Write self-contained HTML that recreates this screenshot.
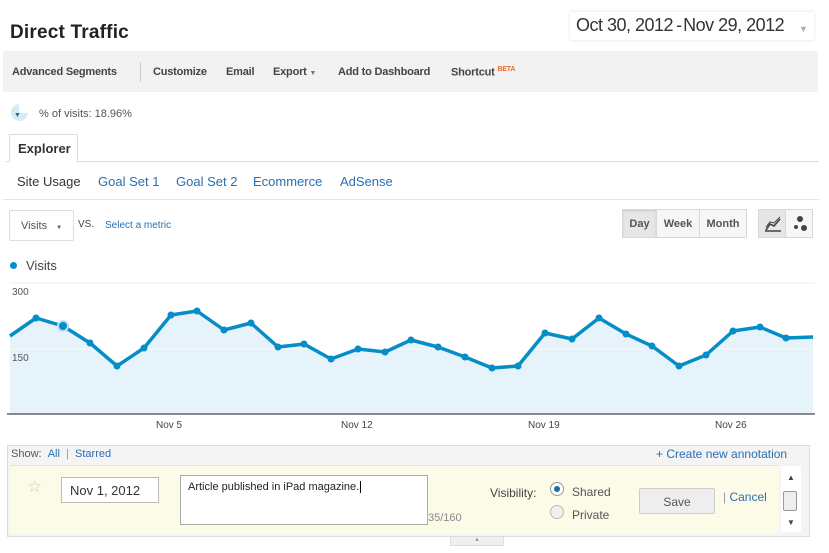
<!DOCTYPE html>
<html><head><meta charset="utf-8"><style>
*{box-sizing:border-box;margin:0;padding:0}
body{width:829px;height:553px;background:#fff;font-family:"Liberation Sans",Arial,sans-serif;position:relative;overflow:hidden;color:#333}
.a{position:absolute}
.lnk{color:#2a6fb0}
.btn{position:absolute;border:1px solid #d8d8d8;background:#f6f6f6;font-size:11px;font-weight:bold;color:#555;text-align:center}
</style></head><body>
<div class="a" style="left:10px;top:22px;font-size:19px;font-weight:bold;color:#222;letter-spacing:0.2px">Direct Traffic</div>
<div class="a" style="left:570px;top:12px;width:244px;height:28px;background:#fff;box-shadow:0 0 3px #ddd"></div>
<div class="a" style="left:576px;top:15px;font-size:18px;color:#333;letter-spacing:-0.5px">Oct 30, 2012<span style="letter-spacing:-2px"> - </span>Nov 29, 2012</div>
<div class="a" style="left:799px;top:24px;font-size:9px;color:#aaa">▼</div>

<div class="a" style="left:3px;top:51px;width:815px;height:41px;background:#f2f2f2"></div>
<div class="a" style="left:140px;top:62px;width:1px;height:20px;background:#ccc"></div>
<div class="a" style="top:66px;left:12px;font-size:11px;font-weight:bold;color:#444;white-space:nowrap;letter-spacing:-0.2px">
<span style="position:absolute;left:0">Advanced Segments</span>
<span style="position:absolute;left:141px">Customize</span>
<span style="position:absolute;left:214px">Email</span>
<span style="position:absolute;left:261px">Export <span style="font-size:7px;color:#777">▼</span></span>
<span style="position:absolute;left:326px">Add to Dashboard</span>
<span style="position:absolute;left:439px">Shortcut <sup style="color:#e07030;font-size:7px">BETA</sup></span>
</div>

<div class="a" style="left:11px;top:104px;width:17px;height:17px;border-radius:50%;background:#d7ebf7"></div>
<div class="a" style="left:19px;top:104px;width:9px;height:9px;background:#fff;border-radius:0 9px 0 0"></div>
<div class="a" style="left:14px;top:112px;font-size:7px;color:#1a6fa8">▼</div>
<div class="a" style="left:39px;top:108px;font-size:11px;color:#555">% of visits: 18.96%</div>

<div class="a" style="left:6px;top:161px;width:813px;height:1px;background:#ddd"></div>
<div class="a" style="left:9px;top:134px;width:69px;height:28px;border:1px solid #ddd;border-bottom:none;background:#fff"></div>
<div class="a" style="left:18px;top:141px;font-size:13px;font-weight:bold;color:#333">Explorer</div>
<div class="a" style="left:17px;top:174px;font-size:13px;white-space:nowrap"><span style="color:#333">Site Usage</span><span class="lnk" style="position:absolute;left:81px">Goal Set 1</span><span class="lnk" style="position:absolute;left:159px">Goal Set 2</span><span class="lnk" style="position:absolute;left:236px">Ecommerce</span><span class="lnk" style="position:absolute;left:323px">AdSense</span></div>
<div class="a" style="left:3px;top:199px;width:816px;height:1px;background:#e4e4e4"></div>

<div class="a" style="left:9px;top:210px;width:65px;height:31px;border:1px solid #ddd;border-radius:2px;background:#fff;font-size:11px;color:#555;padding:9px 0 0 11px">Visits <span style="font-size:6px;margin-left:6px">▼</span></div>
<div class="a" style="left:78px;top:219px;font-size:10px;color:#444">VS.</div>
<div class="a lnk" style="left:105px;top:220px;font-size:10px">Select a metric</div>

<div class="btn" style="left:622px;top:209px;width:35px;height:29px;background:#e6e6e6;padding-top:8px;box-shadow:inset 0 1px 2px #ccc">Day</div>
<div class="btn" style="left:656px;top:209px;width:44px;height:29px;padding-top:8px">Week</div>
<div class="btn" style="left:699px;top:209px;width:48px;height:29px;padding-top:8px">Month</div>
<div class="btn" style="left:758px;top:209px;width:28px;height:29px;background:#e6e6e6"></div>
<div class="btn" style="left:785px;top:209px;width:28px;height:29px"></div>
<svg class="a" style="left:758px;top:209px" width="56" height="30"><path d="M8 21 L12 15 L16 17 L22 10" stroke="#444" stroke-width="1.6" fill="none"/><path d="M8 18 L12 13 L16 14 L22 8" stroke="#444" stroke-width="1" fill="none"/><path d="M7 22 H23" stroke="#444" stroke-width="1.5"/><circle cx="42" cy="10" r="3" fill="#444"/><circle cx="38" cy="18" r="2" fill="#444"/><circle cx="46" cy="19" r="3" fill="#444"/></svg>

<div class="a" style="left:10px;top:262px;width:7px;height:7px;border-radius:50%;background:#058dc7"></div>
<div class="a" style="left:26px;top:258px;font-size:13px;color:#444">Visits</div>

<svg class="a" style="left:0;top:280px" width="829" height="160">
<line x1="10" y1="3" x2="815" y2="3" stroke="#eee"/>
<polygon fill="#e6f3fa" points="10,134 10,56 36,38 63,46 90,63 117,86 144,68 171,35 197,31 224,50 251,43 278,67 304,64 331,79 358,69 385,72 411,60 438,67 465,77 492,88 518,86 545,53 572,59 599,38 626,54 652,66 679,86 706,75 733,51 760,47 786,58 813,57 813,134"/>
<line x1="10" y1="69" x2="815" y2="69" stroke="#fff" stroke-opacity="0.6"/>
<text x="12" y="15" font-size="10" fill="#555" font-family="Liberation Sans">300</text>
<text x="12" y="81" font-size="10" fill="#555" font-family="Liberation Sans">150</text>
<polyline fill="none" stroke="#058dc7" stroke-width="3.5" stroke-linejoin="round" points="10,56 36,38 63,46 90,63 117,86 144,68 171,35 197,31 224,50 251,43 278,67 304,64 331,79 358,69 385,72 411,60 438,67 465,77 492,88 518,86 545,53 572,59 599,38 626,54 652,66 679,86 706,75 733,51 760,47 786,58 813,57"/>
<g fill="#058dc7">
<circle cx="36" cy="38" r="3.5"/><circle cx="90" cy="63" r="3.5"/><circle cx="117" cy="86" r="3.5"/><circle cx="144" cy="68" r="3.5"/><circle cx="171" cy="35" r="3.5"/><circle cx="197" cy="31" r="3.5"/><circle cx="224" cy="50" r="3.5"/><circle cx="251" cy="43" r="3.5"/><circle cx="278" cy="67" r="3.5"/><circle cx="304" cy="64" r="3.5"/><circle cx="331" cy="79" r="3.5"/><circle cx="358" cy="69" r="3.5"/><circle cx="385" cy="72" r="3.5"/><circle cx="411" cy="60" r="3.5"/><circle cx="438" cy="67" r="3.5"/><circle cx="465" cy="77" r="3.5"/><circle cx="492" cy="88" r="3.5"/><circle cx="518" cy="86" r="3.5"/><circle cx="545" cy="53" r="3.5"/><circle cx="572" cy="59" r="3.5"/><circle cx="599" cy="38" r="3.5"/><circle cx="626" cy="54" r="3.5"/><circle cx="652" cy="66" r="3.5"/><circle cx="679" cy="86" r="3.5"/><circle cx="706" cy="75" r="3.5"/><circle cx="733" cy="51" r="3.5"/><circle cx="760" cy="47" r="3.5"/><circle cx="786" cy="58" r="3.5"/></g>
<circle cx="63" cy="46" r="5" fill="#058dc7" stroke="#bfe0f2" stroke-width="2"/>
<line x1="7" y1="134" x2="815" y2="134" stroke="#666" stroke-width="1.5"/>
<g font-size="10" fill="#444" font-family="Liberation Sans"><text x="156" y="148">Nov 5</text><text x="341" y="148">Nov 12</text><text x="528" y="148">Nov 19</text><text x="715" y="148">Nov 26</text></g>
</svg>

<div class="a" style="left:7px;top:445px;width:803px;height:92px;border:1px solid #ddd;background:#f4f4f4"></div>
<div class="a" style="left:11px;top:448px;font-size:11px;color:#555;white-space:nowrap">Show: &nbsp;<span class="lnk">All</span> &nbsp;<span style="color:#999">|</span> &nbsp;<span class="lnk">Starred</span></div>
<div class="a lnk" style="left:656px;top:447px;font-size:12px">+ Create new annotation</div>
<div class="a" style="left:10px;top:465px;width:769px;height:69px;background:#fbfbe8;border-top:1px solid #e4e4d0"></div>
<div class="a" style="left:27px;top:477px;font-size:17px;color:#ccc">☆</div>
<div class="a" style="left:61px;top:477px;width:98px;height:26px;border:1px solid #bbb;background:#fff;font-size:13px;color:#333;padding:5px 0 0 8px">Nov 1, 2012</div>
<div class="a" style="left:180px;top:475px;width:248px;height:50px;border:1px solid #aaa;background:#fff;font-size:11px;color:#222;padding:5px 7px">Article published in iPad magazine.<span style="border-left:1px solid #000;margin-left:1px"></span></div>
<div class="a" style="left:428px;top:512px;font-size:11px;color:#888">35/160</div>
<div class="a" style="left:490px;top:486px;font-size:12px;color:#444">Visibility:</div>
<div class="a" style="left:550px;top:482px;width:14px;height:14px;border-radius:50%;border:1px solid #999;background:#fff"><div style="margin:3px;width:6px;height:6px;border-radius:50%;background:#1a6fa8"></div></div>
<div class="a" style="left:550px;top:505px;width:14px;height:14px;border-radius:50%;border:1px solid #bbb;background:#f0f0f0"></div>
<div class="a" style="left:572px;top:485px;font-size:12px;color:#555">Shared</div>
<div class="a" style="left:572px;top:508px;font-size:12px;color:#555">Private</div>
<div class="a" style="left:639px;top:488px;width:76px;height:26px;border:1px solid #ccc;border-radius:2px;background:#eee;font-size:12px;color:#555;text-align:center;padding-top:6px">Save</div>
<div class="a" style="left:723px;top:490px;font-size:12px"><span style="color:#999">| </span><span class="lnk">Cancel</span></div>
<div class="a" style="left:781px;top:466px;width:20px;height:66px;background:#fff"></div>
<div class="a" style="left:787px;top:473px;font-size:8px;color:#444">▲</div>
<div class="a" style="left:783px;top:491px;width:14px;height:20px;border:1px solid #999;border-radius:2px;background:#eee"></div>
<div class="a" style="left:787px;top:518px;font-size:8px;color:#444">▼</div>
<div class="a" style="left:450px;top:537px;width:54px;height:9px;background:#f0f0f0;border:1px solid #ddd;border-top:none;font-size:6px;color:#999;text-align:center">▲</div>
</body></html>
